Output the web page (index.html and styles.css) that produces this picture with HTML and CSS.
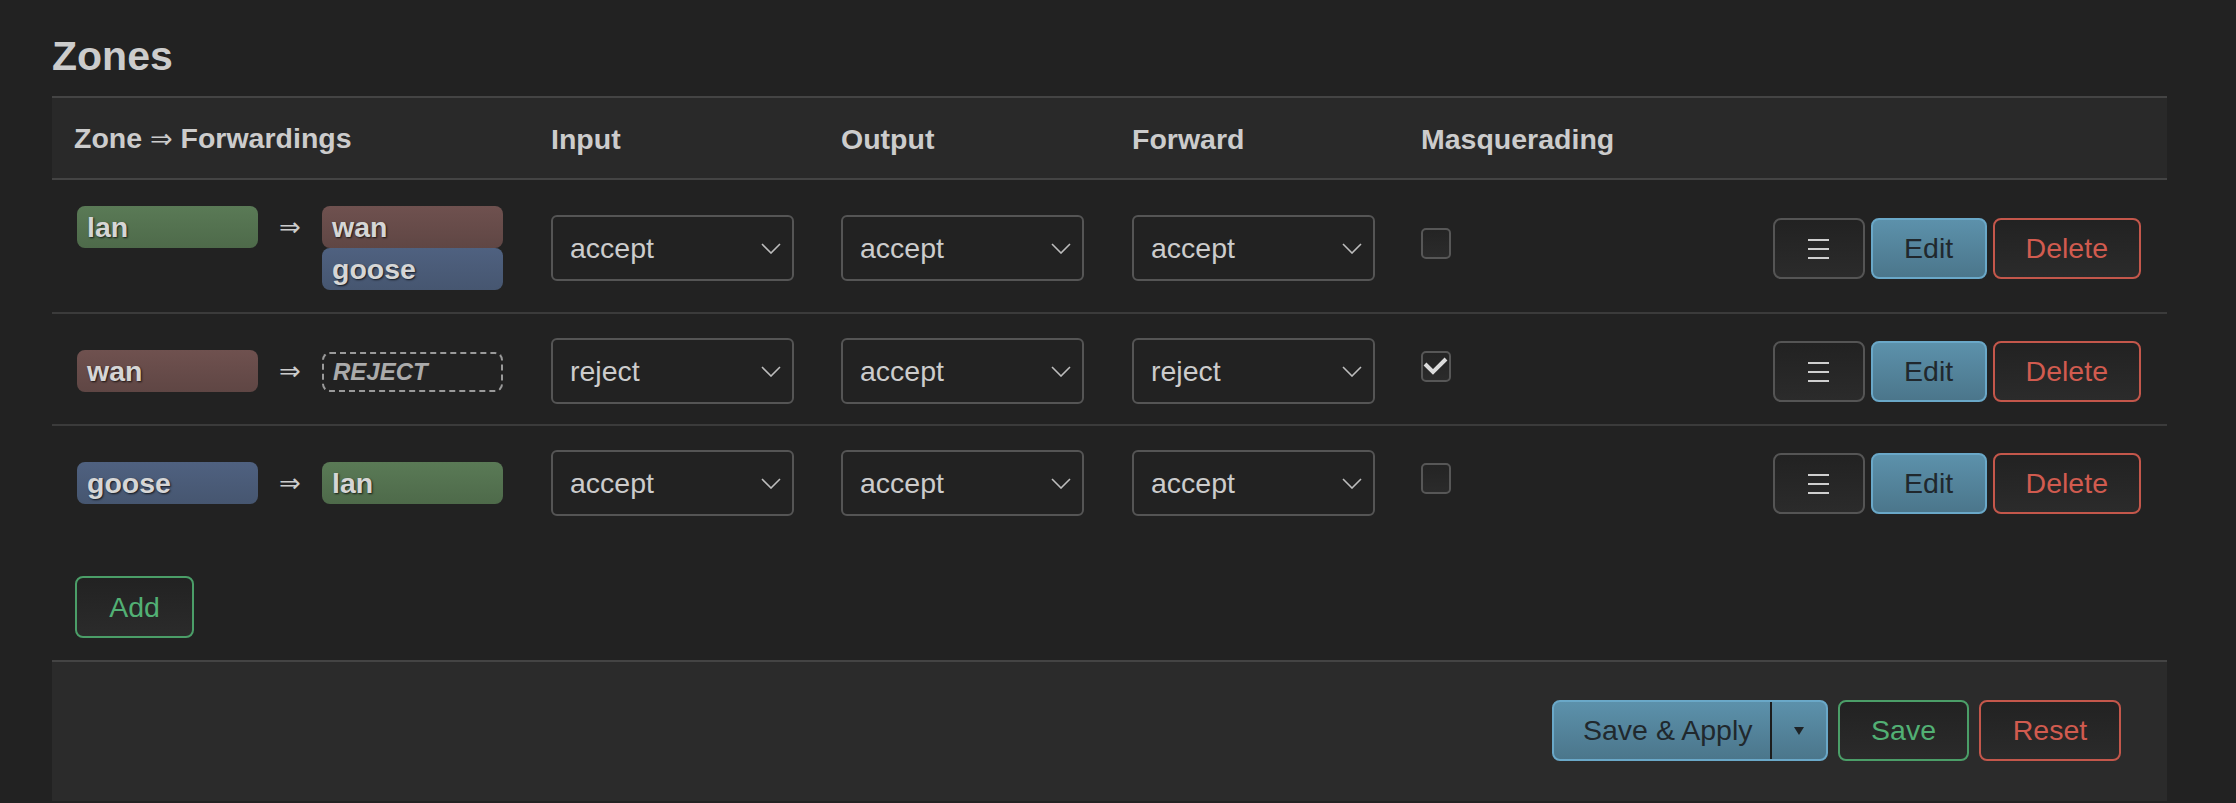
FILE: index.html
```html
<!DOCTYPE html>
<html>
<head>
<meta charset="utf-8">
<title>Zones</title>
<link rel="stylesheet" href="styles.css">
</head>
<body>
<div class="page">
  <h3 class="title">Zones</h3>
  <div class="table">
    <div class="tr head">
      <div class="th">Zone <span class="harrow">⇒</span> Forwardings</div>
      <div class="th">Input</div>
      <div class="th">Output</div>
      <div class="th">Forward</div>
      <div class="th">Masquerading</div>
      <div class="th last"></div>
    </div>

    <div class="tr">
      <div class="td zonecell">
        <span class="badge lan single">lan</span>
        <span class="arrow">⇒</span>
        <div class="stack">
          <span class="badge wan">wan</span>
          <span class="badge goose">goose</span>
        </div>
      </div>
      <div class="td"><div class="select"><span>accept</span><svg class="chev" width="20" height="11" viewBox="0 0 20 11"><polyline points="1,1 10,10 19,1" fill="none" stroke="#bdbdbd" stroke-width="1.6"/></svg></div></div>
      <div class="td"><div class="select"><span>accept</span><svg class="chev" width="20" height="11" viewBox="0 0 20 11"><polyline points="1,1 10,10 19,1" fill="none" stroke="#bdbdbd" stroke-width="1.6"/></svg></div></div>
      <div class="td"><div class="select"><span>accept</span><svg class="chev" width="20" height="11" viewBox="0 0 20 11"><polyline points="1,1 10,10 19,1" fill="none" stroke="#bdbdbd" stroke-width="1.6"/></svg></div></div>
      <div class="td"><span class="cb"></span></div>
      <div class="td last actions">
        <button class="btn neutral"><svg width="21" height="21" viewBox="0 0 21 21"><rect x="0" y="1" width="21" height="2" fill="#cfcfcf"/><rect x="0" y="10" width="21" height="2" fill="#cfcfcf"/><rect x="0" y="19" width="21" height="2" fill="#cfcfcf"/></svg></button>
        <button class="btn edit">Edit</button>
        <button class="btn danger">Delete</button>
      </div>
    </div>

    <div class="tr sep">
      <div class="td zonecell">
        <span class="badge wan single">wan</span>
        <span class="arrow">⇒</span>
        <div class="stack">
          <span class="reject">REJECT</span>
        </div>
      </div>
      <div class="td"><div class="select"><span>reject</span><svg class="chev" width="20" height="11" viewBox="0 0 20 11"><polyline points="1,1 10,10 19,1" fill="none" stroke="#bdbdbd" stroke-width="1.6"/></svg></div></div>
      <div class="td"><div class="select"><span>accept</span><svg class="chev" width="20" height="11" viewBox="0 0 20 11"><polyline points="1,1 10,10 19,1" fill="none" stroke="#bdbdbd" stroke-width="1.6"/></svg></div></div>
      <div class="td"><div class="select"><span>reject</span><svg class="chev" width="20" height="11" viewBox="0 0 20 11"><polyline points="1,1 10,10 19,1" fill="none" stroke="#bdbdbd" stroke-width="1.6"/></svg></div></div>
      <div class="td"><span class="cb"><svg width="26" height="26" viewBox="0 0 26 26"><polyline points="2,11 10,19 23,6" fill="none" stroke="#dcdcdc" stroke-width="4"/></svg></span></div>
      <div class="td last actions">
        <button class="btn neutral"><svg width="21" height="21" viewBox="0 0 21 21"><rect x="0" y="1" width="21" height="2" fill="#cfcfcf"/><rect x="0" y="10" width="21" height="2" fill="#cfcfcf"/><rect x="0" y="19" width="21" height="2" fill="#cfcfcf"/></svg></button>
        <button class="btn edit">Edit</button>
        <button class="btn danger">Delete</button>
      </div>
    </div>

    <div class="tr sep">
      <div class="td zonecell">
        <span class="badge goose single">goose</span>
        <span class="arrow">⇒</span>
        <div class="stack">
          <span class="badge lan">lan</span>
        </div>
      </div>
      <div class="td"><div class="select"><span>accept</span><svg class="chev" width="20" height="11" viewBox="0 0 20 11"><polyline points="1,1 10,10 19,1" fill="none" stroke="#bdbdbd" stroke-width="1.6"/></svg></div></div>
      <div class="td"><div class="select"><span>accept</span><svg class="chev" width="20" height="11" viewBox="0 0 20 11"><polyline points="1,1 10,10 19,1" fill="none" stroke="#bdbdbd" stroke-width="1.6"/></svg></div></div>
      <div class="td"><div class="select"><span>accept</span><svg class="chev" width="20" height="11" viewBox="0 0 20 11"><polyline points="1,1 10,10 19,1" fill="none" stroke="#bdbdbd" stroke-width="1.6"/></svg></div></div>
      <div class="td"><span class="cb"></span></div>
      <div class="td last actions">
        <button class="btn neutral"><svg width="21" height="21" viewBox="0 0 21 21"><rect x="0" y="1" width="21" height="2" fill="#cfcfcf"/><rect x="0" y="10" width="21" height="2" fill="#cfcfcf"/><rect x="0" y="19" width="21" height="2" fill="#cfcfcf"/></svg></button>
        <button class="btn edit">Edit</button>
        <button class="btn danger">Delete</button>
      </div>
    </div>
  </div>

  <div class="addrow">
    <button class="btn positive">Add</button>
  </div>

  <div class="footer">
    <div class="split">
      <span class="split-main">Save &amp; Apply</span>
      <span class="split-div"></span>
      <span class="split-caret"><svg width="10" height="8" viewBox="0 0 10 8"><polygon points="0,0 10,0 5,8" fill="#1e2326"/></svg></span>
    </div>
    <button class="btn positive">Save</button>
    <button class="btn danger">Reset</button>
  </div>
</div>
</body>
</html>
```

FILE: styles.css
```css
* { box-sizing: border-box; }

html, body {
  margin: 0;
  background: #222222;
}

body {
  font-family: "Liberation Sans", Arial, "DejaVu Sans", sans-serif;
  font-size: 28.5px;
  color: #cccccc;
}

.page {
  padding: 0 69px 0 52px;
}

.title {
  margin: 0 0 16px 0;
  padding-top: 32px;
  font-size: 41px;
  line-height: 48px;
  font-weight: bold;
  color: #cccccc;
}

.table {
  display: flex;
  flex-direction: column;
}

.tr {
  display: grid;
  grid-template-columns: 477px 290px 291px 289px 1fr auto;
  align-items: center;
  padding: 24px 0 20px 0;
}

.tr.sep {
  border-top: 2px solid #3b3b3b;
}

.tr.head {
  padding: 0;
  height: 84px;
  background: #292929;
  border-top: 2px solid #444444;
  border-bottom: 2px solid #444444;
}

.th {
  padding: 0 22px;
  font-weight: bold;
  line-height: 80px;
  color: #cccccc;
  white-space: nowrap;
}

.harrow {
  font-family: "DejaVu Sans", sans-serif;
  font-weight: normal;
  font-size: 27px;
}

.td {
  padding: 0 22px;
}

.th.last, .td.last {
  padding: 0 26px 0 22px;
}

.zonecell {
  display: flex;
  align-items: flex-start;
}

.badge {
  display: block;
  width: 181px;
  height: 42px;
  line-height: 42px;
  padding-left: 10px;
  border-radius: 8px;
  font-weight: bold;
  color: #d6d6d6;
  text-shadow: 1px 1px 2px rgba(0, 0, 0, 0.75);
}

.badge.single {
  margin: 2px 0 2px 3px;
}

.badge.lan { background: linear-gradient(#5a7a56, #4e6a4a); }
.badge.wan { background: linear-gradient(#6f514f, #5f4644); }
.badge.goose { background: linear-gradient(#4f6180, #465670); }

.arrow {
  width: 64px;
  height: 42px;
  margin-top: 2px;
  line-height: 42px;
  text-align: center;
  font-family: "DejaVu Sans", sans-serif;
  font-size: 26px;
  color: #cccccc;
}

.stack {
  display: flex;
  flex-direction: column;
  padding: 2px 0;
}

.reject {
  display: block;
  width: 181px;
  height: 40px;
  margin-top: 2px;
  line-height: 36px;
  padding-left: 9px;
  border: 2px dashed #9a9a9a;
  border-radius: 8px;
  font-size: 24px;
  font-weight: bold;
  font-style: italic;
  color: #ababab;
}

.select {
  display: flex;
  align-items: center;
  justify-content: space-between;
  width: 243px;
  height: 66px;
  padding: 0 11px 0 17px;
  border: 2px solid #555555;
  border-radius: 6px;
  background: #222222;
  color: #cccccc;
}

.chev { display: block; }

.cb {
  display: block;
  width: 30px;
  height: 31px;
  margin-bottom: 9px;
  border: 2px solid #575757;
  border-radius: 5px;
  background: linear-gradient(#242424, #2b2b2b);
}

.cb svg { display: block; }

.actions {
  display: flex;
  justify-content: flex-end;
  gap: 6px;
}

.btn {
  display: inline-flex;
  align-items: center;
  justify-content: center;
  height: 61px;
  padding: 0 31px;
  border: 2px solid #555555;
  border-radius: 8px;
  background: linear-gradient(#222222, #2b2b2b);
  font-family: "Liberation Sans", Arial, sans-serif;
  font-size: 28.5px;
  color: #cccccc;
  white-space: nowrap;
}

.btn.neutral {
  width: 92px;
  padding: 0;
}

.btn.neutral svg { display: block; }

.btn.edit {
  width: 116px;
  background: linear-gradient(#5c91ab, #4b768b);
  border-color: #6aa8c8;
  color: #20282d;
}

.btn.danger {
  border-color: #c4574b;
  color: #d15b4f;
}

.btn.positive {
  border-color: #4b9e68;
  color: #52b074;
}

.addrow {
  display: flex;
  margin-top: 40px;
  margin-bottom: 22px;
  padding-left: 23px;
}

.addrow .btn {
  width: 119px;
  height: 62px;
}

.footer {
  display: flex;
  justify-content: flex-end;
  align-items: center;
  gap: 10px;
  padding: 38px 46px 40px 0;
  background: #2b2b2b;
  border-top: 2px solid #444444;
}

.split {
  display: flex;
  align-items: stretch;
  width: 276px;
  height: 61px;
  border: 2px solid #6aa8c8;
  border-radius: 8px;
  background: linear-gradient(#5c91ab, #4b768b);
  color: #20282d;
}

.split-main {
  display: flex;
  align-items: center;
  padding-left: 29px;
  width: 216px;
  white-space: nowrap;
}

.split-div {
  width: 2px;
  background: #1c1c1c;
}

.split-caret {
  flex: 1;
  display: flex;
  align-items: center;
  justify-content: center;
}

.split-caret svg { display: block; }

.footer .btn.positive { width: 131px; }
.footer .btn.danger { width: 142px; }
```
